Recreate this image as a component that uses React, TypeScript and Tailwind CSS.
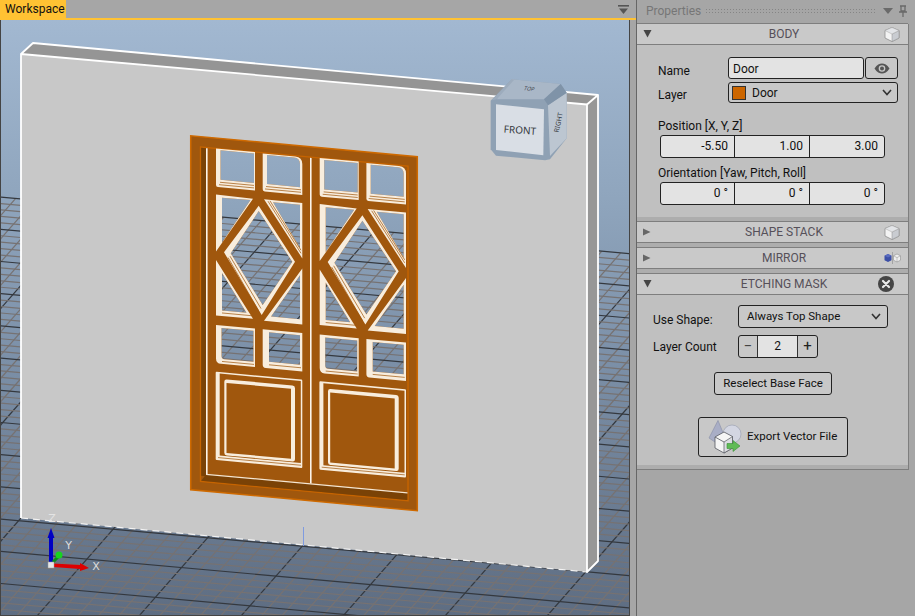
import type { ReactNode } from "react";

const SHEAR = "matrix(1 0.0925 0 1 0 -17.575)";
const CREAM = "#f8eddd";
const BROWN = "#a0570d";
const DARK_BROWN = "#7a4206";
const DOOR_OFFSET = 103.7;

const numbers = (from: number, to: number, step: number) => {
  const out: number[] = [];
  for (let v = from; v <= to; v += step) out.push(v);
  return out;
};

const FloorGrid = () => {
  const across = numbers(0, 68, 1);
  const along = numbers(0, 50, 1);
  return (
    <g>
      {along.map((k) => {
        const d = 37 + 20.4 * (k - 20);
        const major = k % 5 === 0;
        // stop each line where it meets the far edge of the floor
        const t = (419 - 0.0905 * d) / 1.2305;
        return (
          <line
            key={k}
            x1={d}
            y1={616}
            x2={d + t}
            y2={616 - 1.14 * t}
            stroke={major ? "#34383e" : "#767272"}
            strokeWidth={major ? 1.2 : 1.2}
          />
        );
      })}
      {across.map((k) => {
        const c = 197 + 6.44 * k;
        const major = k % 5 === 0;
        return (
          <line
            key={k}
            x1={0}
            y1={c}
            x2={630}
            y2={c + 630 * 0.09}
            stroke={major ? "#34383e" : "#767272"}
            strokeWidth={major ? 1.2 : 1.2}
          />
        );
      })}
    </g>
  );
};

type Pt = [number, number];

const rectPath = (x1: number, y1: number, x2: number, y2: number, tr = 0, bl = 0) =>
  `M${x1} ${y1}H${x2 - tr}Q${x2} ${y1} ${x2} ${y1 + tr}V${y2}H${x1 + bl}Q${x1} ${y2} ${x1} ${y2 - bl}Z`;

// frame outline and glass opening of every light of a door leaf, in door-plane coordinates
const lightsAt = (dx: number) => {
  const r = (x1: number, y1: number, x2: number, y2: number, tr = 0, bl = 0) =>
    rectPath(x1 + dx, y1, x2 + dx, y2, tr, bl);
  const p = (pts: Pt[]) => `M${pts.map(([x, y]) => `${x + dx} ${y}`).join("L")}Z`;
  return [
    { frame: r(216, 146, 255, 184.5, 0, 2), pane: r(220.5, 147.5, 254, 177) },
    { frame: r(262.7, 146.7, 302.3, 184.5, 7, 2), pane: r(267, 148, 300, 177, 6) },
    { frame: r(216, 322.6, 255, 361, 0, 5), pane: r(221.5, 325, 253.5, 356, 0, 3) },
    { frame: r(262.7, 322.6, 302.3, 361, 0, 3), pane: r(269, 325, 300, 354.5) },
    {
      frame: p([[216, 192], [253, 193], [216, 249]]),
      pane: p([[222, 194.7], [250.5, 194.5], [222, 239.5]]),
    },
    {
      frame: p([[264, 192.5], [302.3, 192.5], [302.3, 248]]),
      pane: p([[273, 194.5], [300, 194.5], [300, 238]]),
    },
    {
      frame: p([[216, 257.5], [253, 313], [216, 313]]),
      pane: p([[222, 270], [246.5, 307.5], [222, 307.5]]),
    },
    {
      frame: p([[302.3, 258], [302.3, 314], [264, 314]]),
      pane: p([[300, 265], [300, 309], [271, 309]]),
    },
    {
      frame: p([[258.7, 199.4], [295, 252], [261.7, 308.4], [224, 249.2]]),
      pane: p([[258.7, 204.7], [292.3, 252.2], [262.7, 298.3], [230.7, 249.5]]),
    },
  ];
};

const allPanes = [0, DOOR_OFFSET]
  .flatMap((dx) => lightsAt(dx))
  .map((l) => l.pane)
  .join("");

const Stripe = ({ a, b }: { a: Pt; b: Pt }) => (
  <line x1={a[0]} y1={a[1]} x2={b[0]} y2={b[1]} stroke={BROWN} strokeWidth={0.7} />
);

const DoorLeaf = ({ dx }: { dx: number }) => (
  <>
    {lightsAt(dx).map((l, i) => (
      <path key={i} d={`${l.frame}${l.pane}`} fill={CREAM} fillRule="evenodd" />
    ))}
    <g transform={`translate(${dx} 0)`}>
      {/* raised panel */}
      <rect x={215.7} y={369.3} width={86.6} height={88.3} rx={1} fill={CREAM} />
      <rect x={219.7} y={370.8} width={81.1} height={82} fill={BROWN} />
      <Stripe a={[218, 455]} b={[301, 455]} />
      <rect x={224.3} y={376} width={70.7} height={76} rx={2.5} fill={CREAM} />
      <rect x={226.5} y={379.5} width={64.5} height={70} fill={BROWN} />
      {/* moulding grooves */}
      <Stripe a={[220, 179.5]} b={[254, 179.5]} />
      <Stripe a={[219, 182]} b={[254, 182]} />
      <Stripe a={[266, 179.5]} b={[301, 179.5]} />
      <Stripe a={[265, 182]} b={[301, 182]} />
      <Stripe a={[268, 194]} b={[301, 243]} />
      <Stripe a={[270, 193.5]} b={[301, 240]} />
      <Stripe a={[228, 254]} b={[259, 305]} />
      <Stripe a={[230, 252.5]} b={[261, 302]} />
      <Stripe a={[222, 310]} b={[252, 310]} />
      <Stripe a={[222, 358.5]} b={[254, 358.5]} />
      <Stripe a={[269, 357.5]} b={[301, 357.5]} />
    </g>
  </>
);

const Door = () => (
  <g transform={SHEAR}>
    <path d={`${rectPath(190.7, 135.7, 417.3, 489.7)}${allPanes}`} fill={BROWN} fillRule="evenodd" />
    <rect x={190.7} y={135.7} width={226.6} height={354} fill="none" stroke="#cf6a00" strokeWidth={1.5} />
    <rect x={200.5} y={146} width={207.5} height={334.5} fill="none" stroke="#c66400" strokeWidth={1.4} />
    <rect x={201.2} y={146.8} width={5} height={328} fill={DARK_BROWN} />
    <polygon points="206.5,472.5 407.3,472.5 407.3,479.8 201.2,479.8" fill={DARK_BROWN} />
    <rect x={206} y={146.7} width={1.6} height={326.5} fill="#fbf4ea" />
    <rect x={206} y={472.2} width={201.5} height={1.2} fill="#f5e6d2" />
    <rect x={310} y={146.7} width={1.6} height={325.5} fill="#fbf4ea" />
    <DoorLeaf dx={0} />
    <DoorLeaf dx={DOOR_OFFSET} />
  </g>
);

const ViewCube = () => (
  <g transform="translate(470 70) scale(0.33333)">
    <polygon points="125,28 272,42 290,68 290,205 240,268 225,271 78,257 62,238 62,92" fill="#8fa1b4" />
    <polygon points="125,28 272,42 222,88 80,88" fill="#a9b7c7" />
    <polygon points="65,91 125,28 132,30 80,88" fill="#9dacbd" />
    <polygon points="234,106 290,68 290,205 240,258" fill="#bcc6d1" />
    <polygon points="222,88 272,42 290,68 234,106" fill="#7f93a8" />
    <polygon points="78,103 222,118 220,256 78,240" fill="#d9dee5" />
    <text x={150} y={191} textAnchor="middle" fontSize={30} fill="#33363b" transform="rotate(4 150 180)" fontFamily="Noto Sans, sans-serif">
      FRONT
    </text>
    <text x={178} y={62} textAnchor="middle" fontSize={16} fill="#3d4248" transform="rotate(6 178 60) skewX(-20)" dx={20} fontFamily="Noto Sans, sans-serif">
      TOP
    </text>
    <text x={268} y={162} textAnchor="middle" fontSize={20} fill="#33363b" transform="rotate(-78 268 158)" fontFamily="Noto Sans, sans-serif">
      RIGHT
    </text>
  </g>
);

const Axes = () => (
  <g>
    <rect x={49} y={537} width={4} height={27} fill="#0000c4" />
    <polygon points="51,528 47.5,538 54.5,538" fill="#0000c4" />
    <line x1={53} y1={562} x2={59} y2={556} stroke="#0b8f16" strokeWidth={3} />
    <circle cx={59} cy={555} r={3.5} fill="#17d41f" />
    <polygon points="53,563.5 80,565 80,563 89,568 80,571 80,569 53,567" fill="#dd0000" />
    <rect x={48} y={562} width={6} height={6} fill="#e6e6e6" stroke="#9a9a9a" strokeWidth={0.5} />
    <text x={52} y={522} textAnchor="middle" fontSize={11} fill="#e4e4e4" fontFamily="DejaVu Sans, sans-serif">Z</text>
    <text x={68.5} y={549} textAnchor="middle" fontSize={11} fill="#dedede" fontFamily="DejaVu Sans, sans-serif">Y</text>
    <text x={96} y={570} textAnchor="middle" fontSize={11} fill="#dedede" fontFamily="DejaVu Sans, sans-serif">X</text>
  </g>
);

const Scene = () => (
  <svg width={628} height={595} viewBox="1 20 628 595" className="block">
    <defs>
      <linearGradient id="sky" gradientUnits="userSpaceOnUse" x1={0} y1={20} x2={0} y2={616}>
        <stop offset="0" stopColor="#a2b8d1" />
        <stop offset="0.3" stopColor="#8fa5bd" />
        <stop offset="0.58" stopColor="#7b8fa7" />
        <stop offset="1" stopColor="#5e6d82" />
      </linearGradient>
    </defs>
    <rect x={0} y={20} width={630} height={596} fill="url(#sky)" />
    <FloorGrid />
    {/* wall block, with the door opening left out */}
    <polygon points="21,54 33,43 598,95 587,104.5" fill="#959595" />
    <polygon points="587,104.5 598,95 598,561 587,572" fill="#979797" />
    <path d="M21 54L587 104.5V572L21 518ZM192 137L416 157.5V509L192 489Z" fill="#c8c8c8" fillRule="evenodd" />
    <line x1={21} y1={518} x2={587} y2={572} stroke="#f2f2f2" strokeWidth={1.2} strokeDasharray="7 5" />
    <g stroke="#ffffff" strokeWidth={1.8} fill="none" strokeLinejoin="round">
      <polyline points="21,518 21,54 33,43 598,95 598,561 587,572 587,104.5 21,54" />
      <line x1={587} y1={104.5} x2={598} y2={95} />
    </g>
    <line x1={303.5} y1={527} x2={303.5} y2={546} stroke="#7f9be0" />
    <Door />
    <ViewCube />
    <Axes />
  </svg>
);

const TriangleDown = () => (
  <svg width={9} height={8} viewBox="0 0 9 8"><polygon points="0.5,0 8.5,0 4.5,7.5" fill="#454545" /></svg>
);

const TriangleRight = () => (
  <svg width={8} height={8} viewBox="0 0 8 8"><polygon points="0,0.5 7.5,4 0,7.5" fill="#666666" /></svg>
);

const CubeIcon = () => (
  <svg width={16} height={15} viewBox="0 0 16 15" className="mr-[8px] shrink-0">
    <polygon points="8,0.5 15,3.5 15,11 8,14.5 1,11 1,3.5" fill="#f3f3f3" stroke="#8f8f8f" strokeWidth={0.8} />
    <polygon points="8,7 15,3.5 15,11 8,14.5" fill="#c9ccd1" stroke="#8f8f8f" strokeWidth={0.5} />
    <polygon points="8,0.5 15,3.5 8,7 1,3.5" fill="#e3e5e8" stroke="#a3a3a3" strokeWidth={0.5} />
  </svg>
);

const MirrorIcon = () => (
  <svg width={17} height={12} viewBox="0 0 17 12" className="mr-[7px] shrink-0">
    <polygon points="4,2 7.5,3.8 7.5,8.2 4,10 0.5,8.2 0.5,3.8" fill="#3c4fa6" />
    <polygon points="4,2 7.5,3.8 4,5.6 0.5,3.8" fill="#5a6cc0" />
    <rect x={8} y={0} width={1} height={12} fill="#a3a3a3" />
    <polygon points="13,2 16.5,3.8 16.5,8.2 13,10 9.5,8.2 9.5,3.8" fill="#efefef" stroke="#8f8f8f" strokeWidth={0.6} />
    <path d="M9.5 3.8L13 5.6L16.5 3.8M13 5.6V10" stroke="#8f8f8f" strokeWidth={0.5} fill="none" />
  </svg>
);

const CloseIcon = () => (
  <svg width={16} height={16} viewBox="0 0 16 16" className="mr-[14px] shrink-0">
    <circle cx={8} cy={8} r={8} fill="#454545" />
    <path d="M5 5L11 11M11 5L5 11" stroke="#e8e8e8" strokeWidth={2.2} strokeLinecap="round" />
  </svg>
);

const Chevron = () => (
  <svg width={10} height={7} viewBox="0 0 10 7" fill="none"><path d="M1 1L5 5.5L9 1" stroke="#333333" strokeWidth={1.6} /></svg>
);

const EyeIcon = () => (
  <svg width={16} height={11} viewBox="0 0 16 11">
    <path d="M0.5 5.5C3 1.5 5.5 0.5 8 0.5S13 1.5 15.5 5.5C13 9.5 10.5 10.5 8 10.5S3 9.5 0.5 5.5Z" fill="#555555" />
    <circle cx={8} cy={5.5} r={3.3} fill="#c8c8c8" />
    <circle cx={8} cy={5.5} r={2} fill="#555555" />
  </svg>
);

const ExportIcon = () => (
  <svg width={35} height={34} viewBox="0 0 35 34" className="shrink-0">
    <circle cx={24} cy={14} r={9} fill="#d3d6e2" stroke="#9ea3b5" strokeWidth={0.7} />
    <polygon points="10,0.5 1,18 10,24 18,20" fill="#a9aec6" stroke="#8e93ab" strokeWidth={0.7} />
    <polygon points="16,12 24.5,16.5 24.5,28 16,33 7,28 7,17" fill="#f5f5f5" stroke="#55585f" strokeWidth={0.8} />
    <polygon points="16,22 24.5,16.5 24.5,28 16,33" fill="#dcdde2" stroke="#55585f" strokeWidth={0.7} />
    <polyline points="7,17 16,22" stroke="#55585f" strokeWidth={0.8} fill="none" />
    <polygon points="19,23.5 25,23.5 25,20.5 32,26 25,31.5 25,28.5 19,28.5" fill="#5fbb55" stroke="#3a8f36" strokeWidth={0.6} />
  </svg>
);

const Section = ({
  title,
  open,
  icon,
  children,
}: {
  title: string;
  open?: boolean;
  icon: ReactNode;
  children?: ReactNode;
}) => (
  <section>
    <header className="grid h-[21px] grid-cols-[46px_1fr_23px] items-center border-b border-[#7e7e7e] bg-[#c9c9c9]">
      <span className="flex pl-[6px]">{open ? <TriangleDown /> : <TriangleRight />}</span>
      <h3 className="text-center text-[12px] font-normal text-[#565059]">{title}</h3>
      <span className="flex justify-end">{icon}</span>
    </header>
    {children}
    <div className="h-[5px] border-b border-[#7e7e7e] bg-[#adadad]" />
  </section>
);

const NumberRow = ({ values }: { values: string[] }) => (
  <div className="ml-[2px] grid h-[23px] w-[225px] grid-cols-[74px_75px_1fr] divide-x divide-[#222] overflow-hidden rounded-[3px] border border-[#222] bg-[#e3e3e3]">
    {values.map((v, i) => (
      <div key={i} className="pr-[6px] text-right leading-[21px] text-[#111]">{v}</div>
    ))}
  </div>
);

const BodyFields = () => (
  <div className="h-[172px] bg-[#c0c0c0] pl-[21px] pt-[12px]">
    <div className="grid grid-cols-[70px_136px_34px] items-center gap-y-[3px]">
      <label className="pt-[6px] leading-[16px] text-[#111]">Name</label>
      <div className="h-[22px] rounded-[3px] border border-[#222] bg-[#e3e3e3] pl-[4px] pt-[1px] leading-[20px] text-[#111]">Door</div>
      <button className="ml-[1px] flex h-[22px] items-center justify-center rounded-[3px] border border-[#222] bg-[#c8c8c8]"><EyeIcon /></button>
      <label className="pt-[5px] leading-[16px] text-[#111]">Layer</label>
      <div className="col-span-2 flex h-[21px] items-center rounded-[3px] border border-[#222] bg-[#c8c8c8] pl-[3px] pr-[5px] text-[#111]">
        <span className="mr-[6px] h-[14px] w-[14px] border border-[#333] bg-[#cc6600]" />
        <span className="flex-1">Door</span>
        <Chevron />
      </div>
    </div>
    <div className="mt-[15px] leading-[16px] text-[#111]">Position [X, Y, Z]</div>
    <div className="mt-[1px]"><NumberRow values={["-5.50", "1.00", "3.00"]} /></div>
    <div className="mt-[7px] leading-[16px] text-[#111]">Orientation [Yaw, Pitch, Roll]</div>
    <div className="mt-[1px]"><NumberRow values={["0 °", "0 °", "0 °"]} /></div>
  </div>
);

const EtchingFields = () => (
  <div className="flex h-[170px] flex-col bg-[#c0c0c0] pt-[10px]">
    <div className="flex items-center pl-[16px]">
      <label className="w-[85px] pt-[6px] leading-[16px] text-[#111]">Use Shape:</label>
      <div className="flex h-[23px] w-[150px] items-center rounded-[3px] border border-[#222] bg-[#c8c8c8] pl-[8px] pr-[6px] text-[11.5px] text-[#111]">
        <span className="flex-1 pt-[1px]">Always Top Shape</span>
        <Chevron />
      </div>
    </div>
    <div className="mt-[7px] flex items-center pl-[16px]">
      <label className="w-[85px] pt-[1px] leading-[16px] text-[#111]">Layer Count</label>
      <div className="grid h-[23px] w-[80px] grid-cols-[19px_40px_1fr] items-stretch divide-x divide-[#333] overflow-hidden rounded-[3px] border border-[#222] bg-[#c8c8c8] text-center leading-[20px]">
        <span className="text-[15px] text-[#444]">−</span>
        <span className="bg-[#e3e3e3] text-[#111]">2</span>
        <span className="text-[15px] text-[#222]">+</span>
      </div>
    </div>
    <button className="ml-[77px] mt-[14px] h-[23px] w-[118px] rounded-[3px] border border-[#222] bg-[#c8c8c8] pt-[1px] text-[11.5px] text-[#111]">
      Reselect Base Face
    </button>
    <button className="ml-[61px] mt-[22px] flex h-[40px] w-[150px] items-center gap-[4px] rounded-[3px] border border-[#222] bg-[#c8c8c8] pl-[9px] text-[11.5px] text-[#111]">
      <ExportIcon />
      <span>Export Vector File</span>
    </button>
  </div>
);

export default function App() {
  return (
    <div className="flex h-[616px] w-[915px] overflow-hidden bg-[#a6a6a6] text-[12px] [font-family:Roboto,sans-serif]">
      <div className="flex w-[636px] flex-col">
        <div className="flex h-[18px] items-stretch justify-between pr-[7px]">
          <div className="w-[66px] bg-[#ffc233] pl-[5px] leading-[19px] text-[#111]">Workspace</div>
          <svg width={11} height={11} viewBox="0 0 11 11" className="mt-[5px]">
            <rect x={0} y={0} width={11} height={1.6} fill="#555" />
            <polygon points="1,3.5 10,3.5 5.5,9" fill="#555" />
          </svg>
        </div>
        <div className="h-[2px] bg-[#ffc233]" />
        <div className="h-[596px] w-[630px] border-x border-b border-x-[#444] border-b-[#444]">
          <Scene />
        </div>
      </div>
      <aside className="w-[279px] border-l border-[#666]">
        <div className="flex h-[24px] w-[271px] items-center border-b border-[#7e7e7e] pb-[2px] pl-[9px] text-[#767676]">
          <span className="w-[59px]">Properties</span>
          <span className="h-[5px] w-[172px] bg-[radial-gradient(#858585_0.8px,transparent_0.8px)] bg-[length:3px_3px]" />
          <svg width={10} height={6} viewBox="0 0 10 6" className="ml-[6px]"><polygon points="0,0 10,0 5,6" fill="#6a6a6a" /></svg>
          <svg width={8} height={12} viewBox="0 0 8 12" className="ml-[6px]">
            <path d="M1 1H7M2 1V6H6V1M0 7H8M4 7V12" stroke="#6a6a6a" strokeWidth={1.3} fill="none" />
          </svg>
        </div>
        <div className="w-[272px] border-r border-[#7e7e7e]">
          <Section title="BODY" open icon={<CubeIcon />}>
            <BodyFields />
          </Section>
          <Section title="SHAPE STACK" icon={<CubeIcon />} />
          <Section title="MIRROR" icon={<MirrorIcon />} />
          <Section title="ETCHING MASK" open icon={<CloseIcon />}>
            <EtchingFields />
          </Section>
        </div>
      </aside>
    </div>
  );
}
